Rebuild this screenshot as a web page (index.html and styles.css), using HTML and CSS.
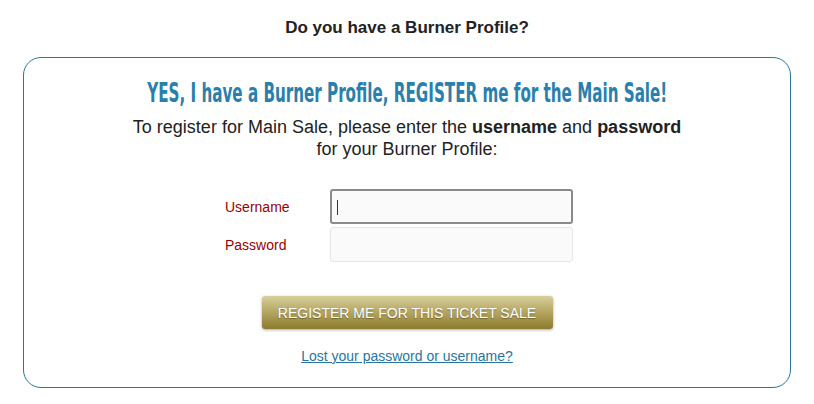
FILE: index.html
```html
<!DOCTYPE html>
<html>
<head>
<meta charset="utf-8">
<link rel="stylesheet" href="styles.css">
</head>
<body>
<div class="page">
  <h2 class="question">Do you have a Burner Profile?</h2>
  <div class="card">
    <h1 class="title"><span class="title-text">YES, I have a Burner Profile, REGISTER me for the Main Sale!</span></h1>
    <p class="intro">To register for Main Sale, please enter the <b>username</b> and <b>password</b><br>for your Burner Profile:</p>
    <div class="form">
      <label class="label" for="u">Username</label>
      <div class="input focused" id="u"><span class="caret"></span></div>
      <label class="label" for="p">Password</label>
      <div class="input" id="p"></div>
    </div>
    <div class="actions">
      <button class="btn">REGISTER ME FOR THIS TICKET SALE</button>
    </div>
    <div class="lost"><a href="#">Lost your password or username?</a></div>
  </div>
</div>
</body>
</html>
```

FILE: styles.css
```css
* { box-sizing: border-box; }
html, body { margin: 0; padding: 0; background: #fff; }
body { font-family: "Liberation Sans", Arial, sans-serif; color: #333; }
.page { width: 814px; padding: 18px 23px 0; }
.question {
  margin: 0;
  text-align: center;
  font-size: 17px;
  font-weight: bold;
  color: #222;
  line-height: 20px;
}
.card {
  margin-top: 19px;
  border: 1px solid #2a759c;
  border-radius: 18px;
  height: 331px;
  padding-top: 20px;
}
.title {
  margin: 0;
  display: flex;
  justify-content: center;
  white-space: nowrap;
  font-family: "DejaVu Sans Condensed", "DejaVu Sans", sans-serif;
  font-weight: bold;
  font-size: 26px;
  line-height: 30px;
  color: #2a80ab;
}
.title-text { display: inline-block; transform: scaleX(0.648); }
.intro {
  margin: 8px 0 0;
  text-align: center;
  font-size: 18px;
  line-height: 22px;
  color: #222;
}
.intro b { color: #222; }
.form {
  margin-top: 29px;
  display: grid;
  grid-template-columns: 105px 243px;
  row-gap: 3px;
  justify-content: center;
  padding-right: 16px;
  align-items: center;
}
.label { color: #990000; font-size: 14px; line-height: 16px; }
.input {
  height: 35px;
  background: #fafafa;
  border: 1px solid #e6e6e6;
  border-radius: 3px;
  position: relative;
}
.input.focused { border: 2px solid #8a8a8a; }
.caret {
  position: absolute;
  left: 5px;
  top: 9px;
  width: 1px;
  height: 15px;
  background: #333;
}
.actions { margin-top: 34px; display: flex; justify-content: center; }
.btn {
  width: 291px;
  height: 33px;
  border: 0;
  border-radius: 3px;
  background: linear-gradient(#d8cf9c, #b3a461 50%, #8c7b2c);
  box-shadow: 0 1px 3px rgba(0,0,0,0.35);
  color: #fff;
  font-family: "Liberation Sans", Arial, sans-serif;
  font-size: 14px;
  text-shadow: 0 1px 1px rgba(0,0,0,0.35);
  padding: 0;
}
.lost { margin-top: 19px; text-align: center; font-size: 14px; line-height: 16px; }
.lost a { color: #2a759c; text-decoration: underline; }
```
